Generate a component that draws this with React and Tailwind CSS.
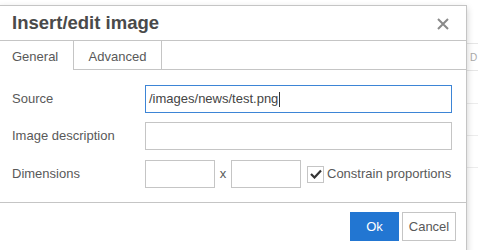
import React from "react";

export default function App() {
  return (
    <div className="relative w-[478px] h-[250px] overflow-hidden bg-white" style={{ fontFamily: '"Liberation Sans", Arial, sans-serif' }}>
      {/* background page behind the modal */}
      <div className="flex flex-col pt-[43px] pl-[467px]">
        <div className="h-[27px] border-t border-[#e6e6e6] flex items-center pl-[3px] text-[10px] text-[#aaa]">D</div>
        <div className="h-[33px] border-t border-[#e6e6e6]"></div>
        <div className="h-[32px] border-t border-[#ececec]"></div>
        <div className="h-[32px] border-t border-[#ececec]"></div>
        <div className="h-[40px] border-t border-[#ececec]"></div>
      </div>

      {/* modal */}
      <div className="absolute left-[-1px] top-[5px] w-[468px] h-[260px] bg-white border border-[#c5c5c5] shadow-[0_3px_7px_rgba(0,0,0,0.2)] flex flex-col">
        <div className="h-[35px] flex items-center justify-between pl-[12px] pr-[17px] border-b border-[#c5c5c5]">
          <span className="text-[18.5px] font-bold text-[#4a4a4a] leading-none mt-[1px]">Insert/edit image</span>
          <svg width="12" height="12" viewBox="0 0 12 12" className="mt-[1px]">
            <path d="M1 1L11 11M11 1L1 11" stroke="#8a8a8a" strokeWidth="2" />
          </svg>
        </div>
        <div className="h-[29px] flex text-[13px] text-[#595959]">
          <div className="w-[74px] flex items-center pl-[12px] pt-[3px] border-r border-[#c5c5c5]">General</div>
          <div className="w-[88px] flex items-center justify-center pt-[3px] border-r border-b border-[#c5c5c5]">Advanced</div>
          <div className="flex-1 border-b border-[#c5c5c5]"></div>
        </div>
        <div className="flex flex-col pt-[15px] pl-[12px] text-[13px] text-[#595959] h-[132px]">
          <div className="flex items-center h-[28px]">
            <span className="w-[133px]">Source</span>
            <div className="w-[307px] h-[28px] border border-[#3d85d6] flex items-center pl-[3px]">
              <span className="text-[#444]">/images/news/test.png</span>
              <span className="w-px h-[15px] bg-[#333] ml-[1px]"></span>
            </div>
          </div>
          <div className="flex items-center h-[28px] mt-[9px]">
            <span className="w-[133px]">Image description</span>
            <div className="w-[307px] h-[28px] border border-[#c5c5c5]"></div>
          </div>
          <div className="flex items-center h-[28px] mt-[10px]">
            <span className="w-[133px]">Dimensions</span>
            <div className="w-[70px] h-[28px] border border-[#c5c5c5]"></div>
            <span className="w-[16px] text-center">x</span>
            <div className="w-[70px] h-[28px] border border-[#c5c5c5]"></div>
            <div className="ml-[6px] w-[17px] h-[17px] border border-[#c5c5c5] flex items-center justify-center">
              <svg width="12" height="10" viewBox="0 0 12 10">
                <path d="M1 5L4.5 8.5L11 1.5" stroke="#333" strokeWidth="2.2" fill="none" />
              </svg>
            </div>
            <span className="ml-[3px]">Constrain proportions</span>
          </div>
        </div>
        <div className="border-t border-[#c5c5c5] flex justify-end pt-[9px] pr-[10px] gap-[3px] text-[13px]">
          <button className="w-[49px] h-[29px] bg-[#2276d2] text-white border border-[#2276d2]">Ok</button>
          <button className="w-[54px] h-[29px] bg-white text-[#595959] border border-[#c5c5c5]">Cancel</button>
        </div>
      </div>
    </div>
  );
}
